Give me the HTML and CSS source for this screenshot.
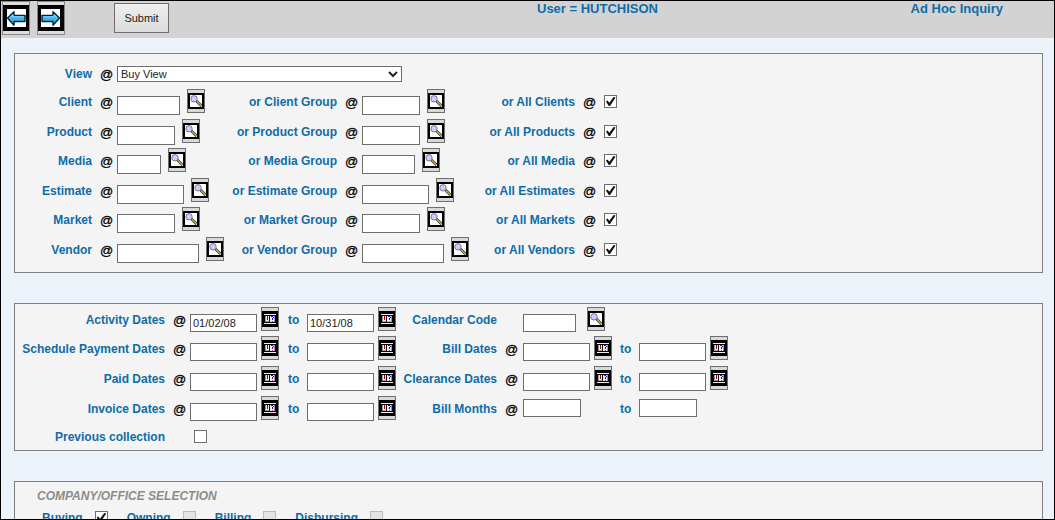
FILE: index.html
```html
<!DOCTYPE html>
<html lang="en">
<head>
<meta charset="utf-8">
<title>Ad Hoc Inquiry</title>
<link rel="stylesheet" href="styles.css">
</head>
<body>
<svg class="defs" aria-hidden="true">
  <symbol id="find" viewBox="0 0 16 16">
    <path fill="#000" d="M0 0h16v16H0z"/><path fill="#fff" d="M2 2h12v12H2z"/>
    <path d="M8.500 8l5 5" stroke="#333" stroke-width="2.600"/>
    <path d="M9 8.500l4.600 4.600" stroke="#d0b440" stroke-width="1.300"/>
    <circle cx="6" cy="5.800" r="3.200" fill="#ccccff" stroke="#6c6c80" stroke-width="0.900"/>
  </symbol>
  <symbol id="cal" viewBox="0 0 16 16">
    <path fill="#000" d="M0 0h16v16H0z"/>
    <path fill="#eee" d="M2 3h12v1H2zM2 12h12v1H2z"/>
    <path fill="#999" d="M3 5h10v6H3z"/>
    <path fill="#eee" d="M4 5h3v5H4zM8 5h4v6H8z"/>
    <path fill="#111" d="M7 5h1v6H7zM12 4h1v1h-1z"/>
    <path fill="#a00010" d="M5 5h1v4H5z"/><path fill="#e33" d="M10 10h1v1h-1z"/>
    <path fill="#11f" d="M9 5h2v1H9zM11 6h1v1h-1zM10 7h1v2h-1z"/>
  </symbol>
  <symbol id="arrow" viewBox="0 0 26 26">
    <path fill="#000" d="M0 0h26v26H0z"/><path fill="#fff" d="M4 4h19v18H4z"/>
    <path d="M4.500 13L11 6.700v3.800h11v6H11v3.800z" fill="#3db4f2" stroke="#12202c" stroke-width="1.400" stroke-linejoin="round"/>
    <path d="M7 12.500l3-2.700v2h11" fill="none" stroke="#8fdcff"/>
  </symbol>
</svg>
<header class="bar">
  <nav class="nav">
    <button class="nav-btn" type="button" aria-label="Back"><svg><use href="#arrow"/></svg></button>
    <button class="nav-btn forward" type="button" aria-label="Forward"><svg><use href="#arrow"/></svg></button>
  </nav>
  <button class="submit" type="submit" form="inquiry">Submit</button>
  <span class="user">User = HUTCHISON</span>
  <h1 class="title">Ad Hoc Inquiry</h1>
</header>
<form id="inquiry" class="form">
  <section class="panel filters">
    <label for="view">View</label><span class="at">@</span>
    <div class="field wide"><select id="view"><option>Buy View</option></select><svg class="chevron" viewBox="0 0 10 7"><path d="M1 1l4 4 4-4" fill="none" stroke="#222" stroke-width="2"/></svg></div>

    <label for="client">Client</label><span class="at">@</span>
    <div class="field"><input id="client" class="w63" type="text"><button class="pick" type="button" aria-label="Find client"><svg><use href="#find"/></svg></button></div>
    <label for="client-g">or Client Group</label><span class="at">@</span>
    <div class="field"><input id="client-g" class="w58" type="text"><button class="pick" type="button" aria-label="Find client group"><svg><use href="#find"/></svg></button></div>
    <label for="client-all">or All Clients</label><span class="at">@</span>
    <input id="client-all" class="check" type="checkbox" checked>

    <label for="product">Product</label><span class="at">@</span>
    <div class="field"><input id="product" class="w58" type="text"><button class="pick" type="button" aria-label="Find product"><svg><use href="#find"/></svg></button></div>
    <label for="product-g">or Product Group</label><span class="at">@</span>
    <div class="field"><input id="product-g" class="w58" type="text"><button class="pick" type="button" aria-label="Find product group"><svg><use href="#find"/></svg></button></div>
    <label for="product-all">or All Products</label><span class="at">@</span>
    <input id="product-all" class="check" type="checkbox" checked>

    <label for="media">Media</label><span class="at">@</span>
    <div class="field"><input id="media" class="w44" type="text"><button class="pick" type="button" aria-label="Find media"><svg><use href="#find"/></svg></button></div>
    <label for="media-g">or Media Group</label><span class="at">@</span>
    <div class="field"><input id="media-g" class="w53" type="text"><button class="pick" type="button" aria-label="Find media group"><svg><use href="#find"/></svg></button></div>
    <label for="media-all">or All Media</label><span class="at">@</span>
    <input id="media-all" class="check" type="checkbox" checked>

    <label for="estimate">Estimate</label><span class="at">@</span>
    <div class="field"><input id="estimate" class="w67" type="text"><button class="pick" type="button" aria-label="Find estimate"><svg><use href="#find"/></svg></button></div>
    <label for="estimate-g">or Estimate Group</label><span class="at">@</span>
    <div class="field"><input id="estimate-g" class="w67" type="text"><button class="pick" type="button" aria-label="Find estimate group"><svg><use href="#find"/></svg></button></div>
    <label for="estimate-all">or All Estimates</label><span class="at">@</span>
    <input id="estimate-all" class="check" type="checkbox" checked>

    <label for="market">Market</label><span class="at">@</span>
    <div class="field"><input id="market" class="w58" type="text"><button class="pick" type="button" aria-label="Find market"><svg><use href="#find"/></svg></button></div>
    <label for="market-g">or Market Group</label><span class="at">@</span>
    <div class="field"><input id="market-g" class="w58" type="text"><button class="pick" type="button" aria-label="Find market group"><svg><use href="#find"/></svg></button></div>
    <label for="market-all">or All Markets</label><span class="at">@</span>
    <input id="market-all" class="check" type="checkbox" checked>

    <label for="vendor">Vendor</label><span class="at">@</span>
    <div class="field"><input id="vendor" class="w82" type="text"><button class="pick" type="button" aria-label="Find vendor"><svg><use href="#find"/></svg></button></div>
    <label for="vendor-g">or Vendor Group</label><span class="at">@</span>
    <div class="field"><input id="vendor-g" class="w82" type="text"><button class="pick" type="button" aria-label="Find vendor group"><svg><use href="#find"/></svg></button></div>
    <label for="vendor-all">or All Vendors</label><span class="at">@</span>
    <input id="vendor-all" class="check" type="checkbox" checked>
  </section>

  <section class="panel dates">
    <label for="act-from">Activity Dates</label><span class="at">@</span>
    <div class="field"><input id="act-from" class="w67" type="text" value="01/02/08"><button class="pick" type="button" aria-label="Pick date"><svg><use href="#cal"/></svg></button></div>
    <label class="to" for="act-to">to</label>
    <div class="field"><input id="act-to" class="w67" type="text" value="10/31/08"><button class="pick" type="button" aria-label="Pick date"><svg><use href="#cal"/></svg></button></div>
    <label for="cal-code">Calendar Code</label><span></span>
    <div class="field code"><input id="cal-code" class="w53" type="text"><button class="pick" type="button" aria-label="Find calendar code"><svg><use href="#find"/></svg></button></div>
    <span></span><span></span>

    <label for="sched-from">Schedule Payment Dates</label><span class="at">@</span>
    <div class="field"><input id="sched-from" class="w67" type="text"><button class="pick" type="button" aria-label="Pick date"><svg><use href="#cal"/></svg></button></div>
    <label class="to" for="sched-to">to</label>
    <div class="field"><input id="sched-to" class="w67" type="text"><button class="pick" type="button" aria-label="Pick date"><svg><use href="#cal"/></svg></button></div>
    <label for="bill-from">Bill Dates</label><span class="at">@</span>
    <div class="field"><input id="bill-from" class="w67" type="text"><button class="pick" type="button" aria-label="Pick date"><svg><use href="#cal"/></svg></button></div>
    <label class="to" for="bill-to">to</label>
    <div class="field"><input id="bill-to" class="w67" type="text"><button class="pick" type="button" aria-label="Pick date"><svg><use href="#cal"/></svg></button></div>

    <label for="paid-from">Paid Dates</label><span class="at">@</span>
    <div class="field"><input id="paid-from" class="w67" type="text"><button class="pick" type="button" aria-label="Pick date"><svg><use href="#cal"/></svg></button></div>
    <label class="to" for="paid-to">to</label>
    <div class="field"><input id="paid-to" class="w67" type="text"><button class="pick" type="button" aria-label="Pick date"><svg><use href="#cal"/></svg></button></div>
    <label for="clear-from">Clearance Dates</label><span class="at">@</span>
    <div class="field"><input id="clear-from" class="w67" type="text"><button class="pick" type="button" aria-label="Pick date"><svg><use href="#cal"/></svg></button></div>
    <label class="to" for="clear-to">to</label>
    <div class="field"><input id="clear-to" class="w67" type="text"><button class="pick" type="button" aria-label="Pick date"><svg><use href="#cal"/></svg></button></div>

    <label for="inv-from">Invoice Dates</label><span class="at">@</span>
    <div class="field"><input id="inv-from" class="w67" type="text"><button class="pick" type="button" aria-label="Pick date"><svg><use href="#cal"/></svg></button></div>
    <label class="to" for="inv-to">to</label>
    <div class="field"><input id="inv-to" class="w67" type="text"><button class="pick" type="button" aria-label="Pick date"><svg><use href="#cal"/></svg></button></div>
    <label for="months-from">Bill Months</label><span class="at">@</span>
    <div class="field months"><input id="months-from" class="w58" type="text"></div>
    <label class="to" for="months-to">to</label>
    <div class="field months"><input id="months-to" class="w58" type="text"></div>

    <label for="previous">Previous collection</label><span></span>
    <input id="previous" class="check" type="checkbox">
  </section>

  <section class="panel office">
    <h2>COMPANY/OFFICE SELECTION</h2>
    <div class="choices">
      <span><label for="buying">Buying</label><input id="buying" class="check" type="checkbox" checked></span>
      <span><label for="owning">Owning</label><input id="owning" class="check" type="checkbox" disabled></span>
      <span><label for="billing">Billing</label><input id="billing" class="check" type="checkbox" disabled></span>
      <span><label for="disbursing">Disbursing</label><input id="disbursing" class="check" type="checkbox" disabled></span>
    </div>
  </section>
</form>
</body>
</html>
```
FILE: styles.css
```css
* {
  box-sizing: border-box;
}

body {
  margin: 0;
  height: 100vh;
  overflow: hidden;
  border: 1px solid #000;
  background: #ecf3fa;
  color: #0e6ca8;
  font: bold 12px/26px "Liberation Sans", Arial, sans-serif;
}

.defs {
  display: none;
}

button,
input,
select {
  margin: 0;
  border: 1px solid #6e6e6e;
  border-radius: 0;
  font: 11px "Liberation Sans", Arial, sans-serif;
  color: #222;
}

svg {
  display: block;
}

/* Top bar */
.bar {
  display: flex;
  align-items: flex-start;
  height: 37px;
  padding: 0 51px 0 1px;
  background: #d3d3d3;
}

.nav {
  display: flex;
  gap: 7px;
}

.nav-btn {
  display: grid;
  place-items: center;
  width: 28px;
  height: 34px;
  padding: 0;
  border-color: #888;
  background: #dcdcdc;
}

.nav-btn svg {
  width: 26px;
  height: 26px;
}

.forward svg {
  transform: scaleX(-1);
}

.submit {
  width: 55px;
  height: 30px;
  margin: 2px 0 0 49px;
  padding: 0;
  background: linear-gradient(#eee, #dcdcdc);
  font-size: 11px;
}

.user,
.title {
  margin: 0;
  font-size: 13px;
  line-height: 16px;
}

.user {
  margin-left: 368px;
}

.title {
  margin-left: auto;
}

/* Panels */
.form {
  display: grid;
  gap: 30px;
  padding: 15px 11px 0 13px;
}

.panel {
  border: 1px solid #808080;
  background: #f4f4f4;
}

.filters,
.dates {
  display: grid;
  justify-content: start;
  align-items: start;
}

.filters {
  grid-template-columns: 77px 25px 112px 108px 25px 107px 106px 25px auto;
  grid-template-rows: 28px 30px 29px 30px 29px 30px 24px;
  padding: 7px 0 11px;
}

.dates {
  grid-template-columns: 150px 25px 98px 19px 90px 100px 26px 97px 19px auto;
  grid-template-rows: 29px 30px 30px 28px 26px;
  padding-top: 3px;
}

label {
  text-align: right;
  white-space: nowrap;
}

.at {
  padding-left: 8px;
  color: #000;
  font-size: 13px;
  font-weight: normal;
  line-height: 28px;
  -webkit-text-stroke: 0.3px #000;
}

.to {
  text-align: left;
}

/* Fields */
.field {
  display: flex;
  align-items: flex-start;
  gap: 7px;
}

.dates .field {
  gap: 4px;
}

.dates .code {
  gap: 11px;
}

.field input {
  height: 19px;
  margin-top: 7px;
  padding: 1px 2px;
  background: #fff;
}

.dates .field input {
  height: 18px;
}

.dates .months input {
  margin-top: 3px;
}

.wide {
  grid-column: 3 / -1;
  width: 285px;
  position: relative;
}

.wide select {
  appearance: none;
  width: 100%;
  height: 16px;
  margin-top: 5px;
  padding: 0 3px;
  background: #fff;
}

.chevron {
  position: absolute;
  top: 10px;
  right: 4px;
  width: 10px;
  height: 7px;
  pointer-events: none;
}

.w44 { width: 44px; }
.w53 { width: 53px; }
.w58 { width: 58px; }
.w63 { width: 63px; }
.w67 { width: 67px; }
.w82 { width: 82px; }

.pick {
  display: grid;
  place-items: center;
  width: 18px;
  height: 24px;
  padding: 0;
  background: #d8d8d8;
}

.pick svg {
  width: 16px;
  height: 16px;
}

/* Tick boxes */
.check {
  appearance: none;
  width: 13px;
  height: 13px;
  margin: 6px 0 0 4px;
  background: #fff;
}

.check:checked::after {
  content: "";
  display: block;
  width: 11px;
  height: 11px;
  background: #111;
  clip-path: polygon(9% 50%, 22% 40%, 40% 62%, 78% 9%, 96% 14%, 46% 90%, 34% 90%);
}

.check:disabled {
  border-color: #bbb;
  background: #e4e4e4;
}

/* Company and office */
.office {
  padding: 5px 22px 12px;
}

.office h2 {
  margin: 0;
  color: #8c8c8c;
  font-size: 12px;
  font-style: italic;
  line-height: 18px;
}

.choices {
  display: flex;
  gap: 19px;
  padding-left: 5px;
}

.choices span {
  display: flex;
  gap: 12px;
}

.choices .check {
  margin-left: 0;
}
```
